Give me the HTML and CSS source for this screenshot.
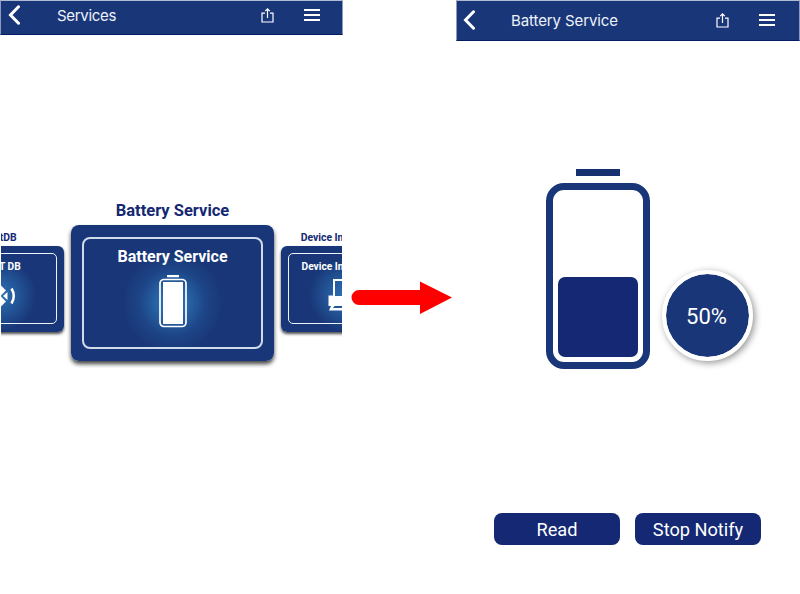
FILE: index.html
```html
<!DOCTYPE html>
<html lang="en">
<head>
<meta charset="utf-8">
<title>Battery Service</title>
<link rel="stylesheet" href="styles.css">
</head>
<body>
<main class="flow">
  <section class="screen">
    <header class="bar">
      <svg class="back" width="12" height="20" viewBox="0 0 12 20"><path d="M10.500 1.800 2.500 10l8 8.200"/></svg>
      <h1 class="title title-services">Services</h1>
      <svg class="share" width="13" height="15" viewBox="0 0 13 15"><path d="M4 5.200H1v8.800h11V5.200H9M6.500 10V1M4.200 3.200 6.500.9l2.300 2.300"/></svg>
      <svg class="menu" width="16" height="12" viewBox="0 0 16 12"><path d="M0 1h16M0 6h16M0 11h16"/></svg>
    </header>
    <div class="viewport">
    <div class="carousel">
      <article class="item side">
        <h2 class="label">GattDB</h2>
        <div class="card"><div class="frame">
          <h3 class="name">GATT DB</h3>
          <svg class="icon" width="34" height="34" viewBox="0 0 34 34"><path class="line" d="M8 9.500 20.500 22.500 15 28V6l5.500 5.500L8 24.500"/><path d="M20 17l4.500-4v8z" fill="#fff"/><path class="line thin" d="M28.500 9.500q4.500 7.500 0 15"/></svg>
        </div></div>
      </article>
      <article class="item">
        <h2 class="label">Battery Service</h2>
        <div class="card"><div class="frame">
          <h3 class="name">Battery Service</h3>
          <svg class="icon" width="28" height="54" viewBox="0 0 28 54"><path d="M8 0h12v2.200H8zM4 7h20v42H4z" fill="#fff"/><rect x="1" y="4.500" width="26" height="47" rx="4" fill="none" stroke="#fff" stroke-width="1.700"/></svg>
        </div></div>
      </article>
      <article class="item side">
        <h2 class="label">Device Information</h2>
        <div class="card"><div class="frame">
          <h3 class="name">Device Information</h3>
          <svg class="icon" width="34" height="34" viewBox="0 0 34 34"><path d="M6 1h22v17H6z" fill="none" stroke="#fff" stroke-width="2"/><path d="M.5 16.500H5L6.500 18h21l1.500-1.500h4.500V27H31l2 4.500H1L3 27H.5z" fill="#fff"/><path d="M5 29l1.500-2h21l1.500 2z" fill="#245596"/></svg>
        </div></div>
      </article>
    </div>
    </div>
  </section>
  <svg class="arrow" width="102" height="34" viewBox="0 0 102 34"><path d="M8 10H69V1.500L101 17.500 69 34V25H8a7.500 7.500 0 0 1 0-15z" fill="#f00"/></svg>
  <section class="screen detail">
    <header class="bar">
      <svg class="back" width="12" height="20" viewBox="0 0 12 20"><path d="M10.500 1.800 2.500 10l8 8.200"/></svg>
      <h1 class="title title-battery">Battery Service</h1>
      <svg class="share" width="13" height="15" viewBox="0 0 13 15"><path d="M4 5.200H1v8.800h11V5.200H9M6.500 10V1M4.200 3.200 6.500.9l2.300 2.300"/></svg>
      <svg class="menu" width="16" height="12" viewBox="0 0 16 12"><path d="M0 1h16M0 6h16M0 11h16"/></svg>
    </header>
    <div class="status">
      <div class="battery">
        <div class="cap"></div>
        <div class="body"><div class="level" style="height:80px"></div></div>
      </div>
      <div class="percent"><span>50%</span></div>
    </div>
    <div class="actions">
      <button class="btn btn-read"><span>Read</span></button>
      <button class="btn btn-notify"><span>Stop Notify</span></button>
    </div>
  </section>
</main>
</body>
</html>
```
FILE: styles.css
```css
* { box-sizing: border-box; }
body { margin: 0; background: #fff; font-family: Roboto, "Liberation Sans", sans-serif; }
h1, h2, h3 { margin: 0; }
.flow { display: flex; height: 594px; overflow: hidden; }
.screen { width: 343px; height: 594px; overflow: hidden; flex: none; }
.bar {
  height: 35px; padding: 0 22px 5px 7px; display: flex; align-items: center;
  background: #193778; color: #fff; border-top: 1px solid #afbbd0; border-bottom: 1px solid #001d65;
  border-right: 1px solid #8d9cbd; border-left: 1px solid #8d9cbd;
}
.bar svg { fill: none; stroke: #fff; flex: none; }
.bar .back { stroke-width: 3; }
.back path { stroke-linecap: round; }
.title { flex: 1; margin-left: 36px; font: 400 15px/20px Inter, sans-serif; white-space: nowrap; color: #eef2fa; position: relative; top: 1px; }
.title-services { letter-spacing: -.3px; margin-left: 37px; }
.title-battery { letter-spacing: -.1px; }
.bar .share { stroke-width: 1.200; margin-right: 30px; }
.bar .menu { stroke-width: 2; }
.viewport { margin: 0 1px; overflow: hidden; }
.carousel { display: flex; gap: 7px; margin-left: -65px; width: 473px; padding: 165px 0 12px; align-items: flex-start; }
.item { width: 203px; flex: none; color: #142873; }
.label, .name { text-align: center; white-space: nowrap; font-weight: 700; }
.label { font-size: 16.500px; line-height: 20px; position: relative; top: 1px; }
.card {
  height: 136px; margin-top: 5px; padding: 12px 11px; border-radius: 8px; color: #fff;
  background: radial-gradient(circle at 50% 57%, #2e70b4 0, #2868aa 14px, #1d4587 33px, #193778 50px);
  box-shadow: 0 3px 4px rgba(0, 0, 0, .75);
}
.frame { height: 112px; border: 2px solid #d0dcec; border-radius: 8px; display: flex; flex-direction: column; align-items: center; overflow: hidden; }
.name { font-size: 16px; line-height: 20px; margin-top: 8px; }
.icon { margin-top: 8px; flex: none; }
.side { width: 128px; margin-top: 30px; }
.side .label { font-size: 10.400px; line-height: 14px; }
.side .card {
  height: 86px; margin-top: 2px; padding: 7px; border-radius: 6px;
  background: radial-gradient(circle at 50% 57%, #2e70b4 0, #2660a2 12px, #193778 36px);
  box-shadow: 0 2px 3px rgba(0, 0, 0, .7);
}
.side .frame { height: 71px; border: 1px solid #edf4fc; border-radius: 5px; }
.side .name { font-size: 10.200px; line-height: 14px; margin-top: 6px; }
.side .icon { margin-top: 5px; }
.line { fill: none; stroke: #fff; stroke-width: 3.500; }
.line.thin { stroke-width: 2.500; }
.arrow { flex: none; margin: 280px 3px 0 8px; }
.detail { width: 344px; }
.detail .bar { height: 41px; padding: 0 24px 1px 6px; }
.status { display: flex; padding: 128px 0 0 90px; }
.battery { width: 105px; flex: none; }
.cap { width: 44px; height: 7px; margin: 0 0 7px 30px; background: #153172; }
.body { width: 104px; height: 186px; border: 7px solid #193778; border-radius: 18px; padding: 5px; display: flex; align-items: flex-end; }
.level { width: 100%; background: #142873; border-radius: 7px; }
.percent {
  width: 91px; height: 91px; margin: 101px 0 0 11px; border: 4px solid #fff; border-radius: 50%;
  background: #193778 padding-box; display: flex; align-items: center; justify-content: center;
  color: #fff; font-size: 22px; box-shadow: 2px 2px 7px rgba(0, 0, 0, .42);
}
.percent span { margin: 2px 2px 0 0; }
.actions { display: flex; gap: 15px; padding: 144px 0 0 38px; }
.btn { width: 126px; height: 32px; padding: 0; border: 0; border-radius: 8px; background: #142873; color: #fff; font: 400 18.200px/31px Roboto, sans-serif; }
```
